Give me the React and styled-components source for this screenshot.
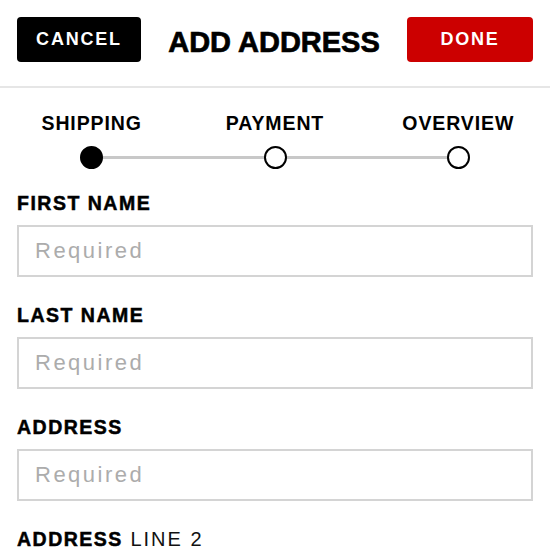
import React from "react";
import styled, { createGlobalStyle } from "styled-components";

const GlobalStyle = createGlobalStyle`
  body {
    margin: 0;
    background: #fff;
    font-family: "Liberation Sans", Arial, sans-serif;
    color: #000;
  }
`;

const Page = styled.div`
  width: 550px;
`;

const Header = styled.header`
  display: flex;
  align-items: center;
  justify-content: space-between;
  padding: 17px 17px 24px;
  border-bottom: 2px solid #e6e6e6;
`;

const Button = styled.button`
  width: ${(p) => p.$width}px;
  height: 45px;
  border: none;
  border-radius: 4px;
  background: ${(p) => (p.$primary ? "#cc0000" : "#000")};
  color: #fff;
  font-family: "Liberation Sans", Arial, sans-serif;
  font-weight: 700;
  font-size: 18px;
  letter-spacing: 1.8px;
  padding: 0;
  cursor: pointer;
`;

const Title = styled.h1`
  margin: 6px 0 0;
  font-size: 29px;
  font-weight: 700;
  line-height: 1;
  -webkit-text-stroke: 0.7px #000;
`;

const Steps = styled.section`
  padding-top: 25px;
`;

const Labels = styled.div`
  display: grid;
  grid-template-columns: repeat(3, 1fr);
`;

const StepLabel = styled.span`
  text-align: center;
  font-size: 19.5px;
  line-height: 20px;
  font-weight: 700;
  letter-spacing: 0.9px;
`;

const Track = styled.div`
  display: flex;
  justify-content: space-between;
  margin: 13px 80px 0;
  background: linear-gradient(#c8c8c8, #c8c8c8) center / calc(100% - 23px) 3px
    no-repeat;
`;

const Dot = styled.span`
  width: 23px;
  height: 23px;
  box-sizing: border-box;
  border-radius: 50%;
  border: 2px solid #000;
  background: ${(p) => (p.$active ? "#000" : "#fff")};
`;

const Form = styled.form`
  display: flex;
  flex-direction: column;
  gap: 28px;
  padding: 24px 17px 0;
`;

const Field = styled.label`
  display: flex;
  flex-direction: column;
  gap: 12px;
`;

const FieldLabel = styled.span`
  font-size: 19.5px;
  line-height: 20px;
  font-weight: 700;
  letter-spacing: 1.5px;
  -webkit-text-stroke: 0.5px #000;
`;

const Light = styled.span`
  font-weight: 400;
  font-size: 20px;
  letter-spacing: 2px;
  color: #111;
  -webkit-text-stroke: 0;
`;

const Input = styled.input`
  box-sizing: border-box;
  width: 100%;
  height: 52px;
  border: 2px solid #d4d4d4;
  padding: 0 16px;
  font-family: "Liberation Sans", Arial, sans-serif;
  font-size: 22px;
  letter-spacing: 2.5px;
  outline: none;
  &::placeholder {
    color: #acacac;
  }
`;

const steps = ["SHIPPING", "PAYMENT", "OVERVIEW"];
const fields = ["FIRST NAME", "LAST NAME", "ADDRESS"];

export default function App() {
  return (
    <Page>
      <GlobalStyle />
      <Header>
        <Button $width={124}>CANCEL</Button>
        <Title>ADD ADDRESS</Title>
        <Button $width={126} $primary>
          DONE
        </Button>
      </Header>
      <Steps>
        <Labels>
          {steps.map((s) => (
            <StepLabel key={s}>{s}</StepLabel>
          ))}
        </Labels>
        <Track>
          {steps.map((s, i) => (
            <Dot key={s} $active={i === 0} />
          ))}
        </Track>
      </Steps>
      <Form>
        {fields.map((f) => (
          <Field key={f}>
            <FieldLabel>{f}</FieldLabel>
            <Input placeholder="Required" />
          </Field>
        ))}
        <Field>
          <FieldLabel>
            ADDRESS<Light> LINE 2</Light>
          </FieldLabel>
          <Input />
        </Field>
      </Form>
    </Page>
  );
}
